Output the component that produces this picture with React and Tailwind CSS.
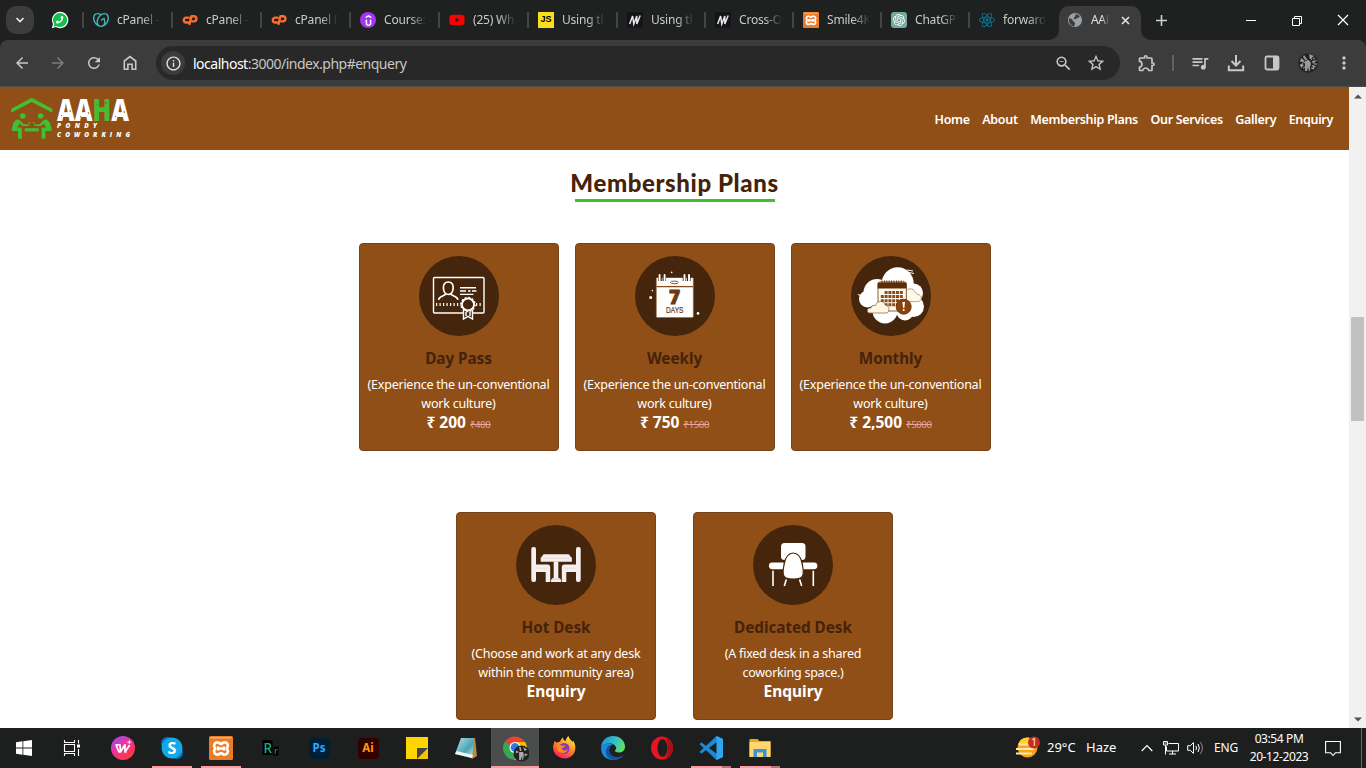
import React from 'react';
import { FaPhoneAlt, FaYoutube } from 'react-icons/fa';
import { SiGodaddy, SiUdemy, SiOpenai, SiReact } from 'react-icons/si';
import {
  MdArrowBack, MdArrowForward, MdRefresh, MdOutlineInfo, MdZoomOut, MdStarBorder,
  MdOutlineExtension, MdQueueMusic, MdMoreVert,
} from 'react-icons/md';

const MdnIcon = () => (
  <svg width="16" height="16" viewBox="0 0 16 16"><rect width="16" height="16" fill="#15141a" /><path d="M2.700 12 5.600 4 6.800 12 9.800 4 9.800 12 13.200 3.500" fill="none" stroke="#e8e8e8" strokeWidth="1.500" /></svg>
);
const GlobeIcon = () => (
  <svg width="16" height="16" viewBox="0 0 16 16"><circle cx="8" cy="8" r="7" fill="#9aa0a6" /><path d="M2.2 6.2c2 .2 3.4.9 3.7 2.5.3 1.1 1.8.7 2 2.2.1 1.3-.3 2-.9 3.5-3.400-.6-5.700-4-4.800-8.200zM8.200 2.300c1.500-.2 3.500.5 4.800 2.200-1 .2-1.200 1.400-2.500 1.500-1.300.2-1.200 1.500-2.600 1.300-1.200-.2-1.500-1.700-.4-2.300.8-.4 1.400-1.300.7-2.700z" fill="#3c3c3c" /></svg>
);
const CpanelIcon = () => (
  <svg width="17" height="16" viewBox="0 0 17 16" fill="none" stroke="#ff6c2c" strokeWidth="2.500" strokeLinecap="round" strokeLinejoin="round">
    <path d="M7 5.500H4.500a2.600 2.600 0 0 0 0 5.200H6.500M8 12.200 10 4h2.600a2.700 2.700 0 0 1 0 5.400H11" />
  </svg>
);
const XamppTile = ({ size }) => (
  <svg className={size === 'lg' ? 'size-6' : 'size-4'} viewBox="0 0 24 24">
    <rect width="24" height="24" rx="1.500" fill="#ec7a26" />
    <path d="M1.500 1.800h21" stroke="#f8b98a" strokeWidth="1.300" />
    <path d="M8.500 6.300c2 0 2.500 1.700 3.500 1.700s1.500-1.700 3.500-1.700a3.300 3.300 0 0 1 2.800 5.200c-.4.600-.4 1.400 0 2a3.300 3.300 0 0 1-2.800 5.200c-2 0-2.500-1.700-3.500-1.700s-1.500 1.700-3.500 1.700a3.300 3.300 0 0 1-2.800-5.200c.4-.6.4-1.400 0-2a3.300 3.300 0 0 1 2.800-5.200zM9 10.500v4M15 10.500v4M9 12.500h6" fill="none" stroke="#fff" strokeWidth="2.700" strokeLinejoin="round" />
  </svg>
);

const tabs = [
  ['cPanel - N', <SiGodaddy className="size-4 text-[#3fb5b8]" />],
  ['cPanel - F', <CpanelIcon />],
  ['cPanel File', <CpanelIcon />],
  ['Course: T', <span className="flex size-4 items-center justify-center rounded-full bg-[#a435f0]"><SiUdemy className="size-[11px] text-white" /></span>],
  ['(25) What', <FaYoutube className="size-4 text-[#ff0000]" />],
  ['Using the', <span className="flex size-4 items-center justify-center bg-[#f7df1e] font-['Liberation_Sans',sans-serif] text-[9px] font-bold text-black">JS</span>],
  ['Using the', <MdnIcon />],
  ['Cross-Ori', <MdnIcon />],
  ['Smile4Kids', <XamppTile />],
  ['ChatGPT', <span className="flex size-4 items-center justify-center rounded-[3px] bg-[#75a99c]"><SiOpenai className="size-3 text-white" /></span>],
  ['forwardRef', <SiReact className="size-4 text-[#087ea4]" />],
];

const fade = '[mask-image:linear-gradient(to_right,black_60%,transparent_100%)]';

function Avatar() {
  return (
    <svg width="20" height="20" viewBox="0 0 20 20">
      <circle cx="10" cy="10" r="9.800" fill="#242424" />
      <path d="M3 5l4 3-5 1zM6 2l3 4-1 2-3-4zM11 1l1 5 4-3zM14 8l5-1-4 4zM2 11l4 1-3 3zM7 8h5l1 3-1 3v4h-1l-1-4-1 4H7v-5zM14 12l4 1-3 3z" fill="#999" />
      <path d="M4 8l3 2M12 4l2 3M15 5l2 1M5 15l2-1M16 11h3M9 7l2 1M3 13l2-3M13 15l3 1" stroke="#ddd" strokeWidth=".7" />
    </svg>
  );
}

function TabStrip() {
  return (
    <div className="flex h-10 items-start bg-[#1f2120] text-[12px] text-[#c9cbca]">
      <div className="ml-[6px] mt-[6px] flex size-7 items-center justify-center rounded-[10px] bg-[#3c3c3c]">
        <svg width="10" height="8" viewBox="0 0 10 8"><path d="M1.500 2 5 5.500 8.500 2" fill="none" stroke="#e8e8e8" strokeWidth="1.700" /></svg>
      </div>
      <span className="relative ml-[18px] mt-3 flex size-4 items-center justify-center">
        <svg className="absolute -inset-px" width="18" height="18" viewBox="0 0 18 18"><path d="M9 .8a8.200 8.200 0 1 1-4 15.300L.8 17.300 2 13A8.200 8.200 0 0 1 9 .8z" fill="#fff" /><path d="M9 2a7 7 0 1 1-3.700 12.900l-2.800.8.800-2.700A7 7 0 0 1 9 2z" fill="#12c04a" /></svg>
        <FaPhoneAlt className="relative size-[7.500px] -scale-x-100 text-white" />
      </span>
      <div className="ml-[14px] flex">
        {tabs.map(([t, icon], i) => (
          <div key={i} className={'flex h-10 shrink-0 items-center ' + (i < 6 ? 'w-[89px]' : 'w-[88px]')}>
            <span className="h-4 w-[1.500px] shrink-0 bg-[#434544]" />
            <span className="ml-[9.500px] flex w-4 shrink-0">{icon}</span>
            <span className={'ml-[8px] h-4 w-[43px] shrink-0 overflow-hidden whitespace-nowrap leading-4 tracking-[-0.2px] ' + fade}>{t}</span>
          </div>
        ))}
      </div>
      <div className="relative ml-[3px] mt-[6px] flex h-[34px] w-[82px] items-center rounded-t-[10px] bg-[#3c3c3c] pb-[6px] text-[#e3e3e3]">
        <svg className="absolute bottom-0 -left-[10px]" width="10" height="10"><path d="M10 0v10H0A10 10 0 0 0 10 0" fill="#3c3c3c" /></svg>
        <svg className="absolute bottom-0 -right-[10px]" width="10" height="10"><path d="M0 0v10h10A10 10 0 0 1 0 0" fill="#3c3c3c" /></svg>
        <span className="ml-2"><GlobeIcon /></span>
        <span className={'ml-2 w-[18px] overflow-hidden whitespace-nowrap tracking-[-0.3px] ' + fade}>AAHA</span>
        <svg className="ml-[12px]" width="9" height="9" viewBox="0 0 9 9"><path d="M1 1l7 7M8 1 1 8" stroke="#e3e3e3" strokeWidth="1.600" /></svg>
      </div>
      <svg className="ml-[15px] mt-[15px]" width="11" height="11" viewBox="0 0 11 11"><path d="M5.500 0v11M0 5.500h11" stroke="#d0d0d0" strokeWidth="1.600" /></svg>
      <div className="ml-auto flex pr-[17px] pt-[14px]">
        <svg width="104" height="13" viewBox="0 0 104 13" fill="none" stroke="#fff">
          <path d="M1 6.500h10" />
          <path d="M47.500 4.500h7v7h-7zM49.500 4.500v-2h7v7h-2" />
          <path d="M93 1l10 10M103 1 93 11" strokeWidth="1.200" />
        </svg>
      </div>
    </div>
  );
}

function Toolbar() {
  return (
    <div className="bg-[#1f2120]">
      <div className="flex h-[46px] items-center rounded-t-lg bg-[#3c3c3c] text-[#c7c7c7]">
        <div className="ml-[13px] flex gap-[18px]">
          <MdArrowBack className="size-[18px]" />
          <MdArrowForward className="size-[18px] text-[#7d7d7d]" />
          <MdRefresh className="size-[18px]" />
          <svg width="18" height="18" viewBox="0 0 18 18"><path d="M3.300 15.300V7L9 2.600 14.700 7v8.300h-3.600v-5H6.900v5z" fill="none" stroke="#c7c7c7" strokeWidth="1.600" /></svg>
        </div>
        <div className="ml-[17px] flex h-[34px] w-[964px] items-center rounded-full bg-[#282828] pl-[5px] text-[14px]">
          <span className="flex size-6 items-center justify-center rounded-full bg-[#3c3c3c]"><MdOutlineInfo className="size-[17px] text-[#e3e3e3]" /></span>
          <span className="ml-2 tracking-[-0.5px] text-[#c7c7c7]"><span className="text-white">localhost</span>:3000/index.php#enquery</span>
          <MdZoomOut className="ml-auto size-[19px]" />
          <MdStarBorder className="ml-[13px] mr-[14px] size-[20px]" />
        </div>
        <MdOutlineExtension className="ml-[17px] size-5" />
        <span className="ml-[15px] h-4 w-[1.500px] bg-[#616161]" />
        <MdQueueMusic className="ml-[16px] size-5" />
        <svg className="ml-[16px]" width="20" height="20" viewBox="0 0 20 20"><path d="M10 2v10M5.500 8 10 12.500 14.500 8M2.800 12.500v4.700h14.400v-4.700" fill="none" stroke="#c7c7c7" strokeWidth="2" /></svg>
        <svg className="ml-[16px]" width="20" height="20" viewBox="0 0 20 20"><rect x="3.500" y="3.500" width="13" height="13" rx="1.500" fill="none" stroke="#c7c7c7" strokeWidth="1.800" /><path d="M11 3.500h5.500v13H11z" fill="#c7c7c7" /></svg>
        <span className="ml-[16px]"><Avatar /></span>
        <MdMoreVert className="ml-[16px] size-5" />
      </div>
      <div className="h-px bg-[#4c4c4c]" />
    </div>
  );
}

function Logo() {
  return (
    <svg width="130" height="50" viewBox="0 0 130 50">
      <g fill="#44bd32">
        <path d="M3.300 14.700 23.700 3.700l20.600 11v4L23.700 8 3.300 18.700z" />
        <circle cx="14.700" cy="22" r="2.800" /><circle cx="32.700" cy="22" r="2.800" />
        <path d="M16.700 34.200h14v3.200h-14z" />
        <path d="M9 25.500q2.500-.5 3.500 1.500l3.300 3.300h3.700v1.700h-5l-3-2.200-2 3.700h3.300q1 0 1 1.300v10H10V37H5q-1.700 0-1.300-2Q5 27 9 25.500zM38.400 25.500q-2.500-.5-3.500 1.500l-3.300 3.300h-3.700v1.700h5l3-2.200 2 3.700h-3.300q-1 0-1 1.300v10h3.800V37h5q1.700 0 1.300-2Q42.400 27 38.400 25.500z" />
      </g>
      <path d="M17.500 31.500h3l1.500-3.700M29.900 31.500h-3l-1.500-3.700" fill="none" stroke="#44bd32" strokeWidth="1" />
      <g fill="#fff" fontFamily="'Open Sans', sans-serif" fontWeight="800">
        <text x="49" y="26.800" fontSize="29.500" textLength="72" lengthAdjust="spacingAndGlyphs">AA<tspan fill="#44bd32">H</tspan>A</text>
        <g fontSize="6.500" fontStyle="italic">
          <text x="49" y="33.600" textLength="40">PONDY</text>
          <text x="49" y="42.800" textLength="73">COWORKING</text>
        </g>
      </g>
      <path d="M53 21l1 1M62 16l.5 2M60 24v1M72 22l1 1M80 18l1 2M89 10l.5 1M98 8v2M91 23l1 1M107 22l1 1M116 17l.5 2M114 24v1" stroke="#8f4f17" strokeWidth=".9" />
    </svg>
  );
}

const art = {
  day: (
    <g fill="none" stroke="#fff" strokeWidth="1.400">
      <path d="M45 57H15.500a1 1 0 0 1-1-1V22.500a1 1 0 0 1 1-1h48.500a1 1 0 0 1 1 1V56a1 1 0 0 1-1 1H53.500" />
      <path d="M29.300 26c3.500 0 5.200 2.500 4.900 6-.3 3.800-2.200 6.500-4.900 6.500S24.700 35.800 24.400 32c-.3-3.500 1.400-6 4.900-6zM26.500 38c-.5 2-6 1.500-7 5.800M32 38c.5 2 6 1.500 7 5.800" strokeWidth="1.700" />
      <path d="M41 31.700h16M41 35h6M49 35h2.500M53 35h4.500M41 38.400h13.500" />
      <path d="M17 48.600h25M57 48.600h7" strokeWidth="3" strokeDasharray="1.200 2.300" />
      <path d="M44.500 54v9l4.500-2.700 4.500 2.700v-9M47 56v4M51 56v4" />
      <circle cx="49" cy="48.500" r="6" fill="#45260c" strokeWidth="1.800" />
      <circle cx="49" cy="48.500" r="7" strokeWidth="1.400" strokeDasharray="1.900 1.770" />
    </g>
  ),
  week: (
    <g>
      <rect x="21.300" y="21.500" width="37" height="40" rx="1" fill="#fff" stroke="#a6652f" strokeWidth=".6" />
      <path d="M21.500 30.600h36.600" stroke="#8a4a16" strokeWidth="1.300" />
      <path d="M21 17h37v4.500H21z" fill="#45260c" />
      <g stroke="#45260c" strokeWidth="3.600"><path d="M25 20v5M29.300 20v5M49.500 20v5M53.800 20v5" /></g>
      <g stroke="#fff" strokeWidth="1.900" strokeLinecap="round"><path d="M24.600 19v5.500M29.600 19v5.500M49.500 19v5.500M54 19v5.500" /></g>
      <ellipse cx="39.400" cy="26.400" rx="4" ry="1.300" fill="none" stroke="#7b3f10" strokeWidth=".9" />
      <text x="39.500" y="48" textAnchor="middle" fontFamily="'Open Sans',sans-serif" fontSize="19" fontWeight="800" fill="#70380d" stroke="#70380d" strokeWidth=".8">7</text>
      <text x="31" y="57" textLength="17.500" lengthAdjust="spacingAndGlyphs" fontFamily="'Liberation Sans',sans-serif" fontSize="8.800" fill="#633412" stroke="#633412" strokeWidth=".2">DAYS</text>
      <g fill="#fff"><circle cx="15.700" cy="41.600" r="1.500" /><circle cx="17.400" cy="34.600" r=".8" /><circle cx="63" cy="57.400" r="1.300" /><circle cx="36.700" cy="16.400" r=".8" /></g>
    </g>
  ),
  month: (
    <g>
      <g fill="#fff">
        <circle cx="46.700" cy="27.300" r="16" /><circle cx="26" cy="36.500" r="13.500" /><circle cx="16.500" cy="43" r="8.500" />
        <circle cx="34" cy="55" r="12.500" /><circle cx="62.500" cy="37" r="9.500" /><circle cx="62.500" cy="50.500" r="10.500" /><circle cx="54" cy="56" r="8.500" />
        <rect x="24" y="34" width="36" height="22" /><path d="M6 38l5 1-1 2z" />
      </g>
      <path d="M56 14l6 1M58 16.500l5 1" stroke="#fff" strokeWidth="1" />
      <path d="M55 45.600V35c1.500-2.500 7-3.500 9 .8 1.500 1.800 1.500 2.400 3 2.700 3 .5 4.500 3.700 2.300 6-1 1.200-3 1.100-5 1.100z" fill="#fff9ea" stroke="#a77a4f" strokeWidth=".7" />
      <rect x="27" y="26" width="28.300" height="29" rx="1.500" fill="#fffaf0" stroke="#6d3811" strokeWidth=".8" />
      <path d="M26.600 32.500V28a1.500 1.500 0 0 1 1.500-1.500h26a1.500 1.500 0 0 1 1.500 1.500v4.500z" fill="#5c2c07" />
      <path d="M30.500 26h22" stroke="#5c2c07" strokeWidth="3" strokeDasharray="1 1.400" />
      <g stroke="#8a4b19" strokeWidth="3" strokeDasharray="3 .8"><path d="M33.600 36.500h19M29.800 40.600h22.700M29.800 44.700h22.700M29.800 48.700h22" /></g>
      <path d="M18 57c-3-1-2-5.500 1.800-5 .6-2.400 3-3 4.500-2.300 1.500-5.500 8.700-5.700 10-.5 3.700 0 5.200 5.800 1.700 7.800z" fill="#fff6e3" stroke="#8f5a2c" strokeWidth=".7" />
      <circle cx="52.700" cy="50.700" r="7.500" fill="#8a4310" stroke="#5f2b05" strokeWidth=".8" />
      <path d="M51.400 46h2.600l-.7 6h-1.200z" fill="#fff" /><circle cx="52.700" cy="54" r="1" fill="#fff" />
    </g>
  ),
  hot: (
    <g fill="#f5f0f0">
      <rect x="15.300" y="22" width="4.700" height="35" rx="2" /><rect x="60" y="22" width="4.700" height="35" rx="2" />
      <path d="M19 39.500h12.500q2.700 0 2.700 2.700V57h-4.500V47H19zM61 39.500H48.500q-2.700 0-2.700 2.700V57h4.500V47H61z" />
      <path d="M27.500 29.300h25.300l2.200 3h.8v4.500H24.700v-4.500h.8z" />
      <path d="M37.700 36.500h4.600v16.200q2.900.4 2.900 4.300H34.900q0-3.900 2.800-4.300z" />
      <path d="M19.500 43.200H31M60.500 43.200H49M27 33.300h27" stroke="#d8cdca" strokeWidth=".7" fill="none" strokeDasharray="2 .7" />
      <path d="M36 54.200h8.300" stroke="#c8bab5" strokeWidth=".7" />
    </g>
  ),
  dedicated: (
    <g fill="#fff">
      <rect x="28" y="18" width="24.500" height="17" rx="3.500" />
      <path d="M40.200 28c5 0 7.600 3.800 8.900 10.500 1.200 5 2 9.400.4 12.500-1.300 2.500-3.700 3-9.300 3s-8-.5-9.300-3c-1.600-3.100-.8-7.500.4-12.500C32.600 31.800 35.200 28 40.200 28z" stroke="#45260c" strokeWidth="1.200" />
      <path d="M19.300 37.400H30.700l-1 6.800H19.300a3.400 3.400 0 0 1 0-6.800zM61 37.400H49.700l1 6.800H61a3.400 3.400 0 0 0 0-6.800z" />
      <path d="M20 45.800V61M60.300 45.800V61M33.300 54.500 31.300 61M46.600 54.500 48.700 61" stroke="#fff" strokeWidth="1.600" />
    </g>
  ),
};

function Card({ kind, title, lines, price, old }) {
  return (
    <div className="flex h-[208px] w-[200px] flex-col items-center rounded border border-[#774215] bg-[#8f4f17] pt-3 text-center">
      <svg width="80" height="80" viewBox="0 0 80 80"><circle cx="40" cy="40" r="40" fill="#45260c" />{art[kind]}</svg>
      <h3 className="mt-[10px] text-[15.300px] leading-6 font-bold tracking-[-0.05px] whitespace-nowrap text-[#45220a]">{title}</h3>
      <p className="mt-[5px] text-[12.500px] leading-[19px] tracking-[-0.24px] whitespace-nowrap text-white">{lines[0]}<br />{lines[1]}</p>
      <p className="flex items-baseline text-[15.500px] leading-[19px] font-bold whitespace-nowrap text-white">
        {price}{old && <s className="ml-1 text-[9.500px] font-normal tracking-[-0.3px] text-[#eba3a3]">{old}</s>}
      </p>
    </div>
  );
}

const exp = ['(Experience the un-conventional', 'work culture)'];

function Page() {
  return (
    <div className="flex h-[641px] bg-white">
      <div className="w-[1349px]">
        <header className="flex h-[63px] items-center bg-[#8f4f17] pl-2">
          <Logo />
          <nav className="ml-auto mr-4 flex gap-[12.500px] pt-[3px] text-[12.500px] font-semibold tracking-[-0.32px] text-white">
            {['Home', 'About', 'Membership Plans', 'Our Services', 'Gallery', 'Enquiry'].map((n) => <a key={n}>{n}</a>)}
          </nav>
        </header>
        <main className="flex flex-col items-center">
          <h2 className="mt-[17px] h-[32px] font-['Lato',sans-serif] text-[24px] leading-[32px] font-black tracking-[0.6px] text-[#45220a]">Membership Plans</h2>
          <div className="h-[3px] w-[200px] bg-[#44bd32]" />
          <div className="mt-[41px] flex gap-4">
            <Card kind="day" title="Day Pass" lines={exp} price="₹ 200" old="₹400" />
            <Card kind="week" title="Weekly" lines={exp} price="₹ 750" old="₹1500" />
            <Card kind="month" title="Monthly" lines={exp} price="₹ 2,500" old="₹5000" />
          </div>
          <div className="mt-[61px] flex gap-[37px]">
            <Card kind="hot" title="Hot Desk" lines={['(Choose and work at any desk', 'within the community area)']} price="Enquiry" />
            <Card kind="dedicated" title="Dedicated Desk" lines={['(A fixed desk in a shared', 'coworking space.)']} price="Enquiry" />
          </div>
        </main>
      </div>
      <div className="flex w-[17px] flex-col items-center bg-[#f1f1f1]">
        <svg className="mt-[7px]" width="8" height="5"><path d="M0 4.500h8L4 .5z" fill="#505050" /></svg>
        <div className="mt-[218px] h-[104px] w-[13px] bg-[#c1c1c1]" />
        <svg className="mt-auto mb-[6px]" width="8" height="5"><path d="M0 .5h8L4 4.500z" fill="#505050" /></svg>
      </div>
    </div>
  );
}

const apps = [
  { i: (
    <svg width="24" height="24"><defs><linearGradient id="wps" x1="0" y1="0" x2=".7" y2="1"><stop offset="0" stopColor="#8c50ff" /><stop offset=".5" stopColor="#f0309a" /><stop offset="1" stopColor="#ff3b3b" /></linearGradient></defs><circle cx="12" cy="12" r="12" fill="url(#wps)" /><path d="M4.500 8.800H9L9.500 16 14 8.800 14 16 18.700 9M5 8.800 8 16h1.500L13 10M14 16h1.500" fill="none" stroke="#fff" strokeWidth="1.700" strokeLinejoin="round" /><path d="M18.300 4.300v3.800M16.400 6.200h3.800" stroke="#fff" strokeWidth="1" /></svg>) },
  { u: 1, i: (
    <svg width="24" height="24"><circle cx="7.500" cy="7.500" r="6.500" fill="#0b73c9" /><circle cx="16.500" cy="16.500" r="6.500" fill="#0872c4" /><circle cx="12" cy="12" r="10.500" fill="#15a8e4" /><text x="12" y="17.800" textAnchor="middle" fontFamily="'Open Sans',sans-serif" fontWeight="700" fontSize="16" fill="#fff">S</text></svg>) },
  { u: 1, i: <XamppTile size="lg" /> },
  { i: (
    <svg width="24" height="24"><path d="M4.500 4h10v15h-10zM15.500 10.500h5v9h-5z" fill="#000" /><text x="5.500" y="17.300" fontFamily="'Noto Sans',sans-serif" fontSize="13.500" fontWeight="500" fill="#12b283">R</text><text x="16.300" y="18.300" fontFamily="'Noto Sans',sans-serif" fontSize="8.500" fill="#12b283">r</text></svg>) },
  { i: <span className="flex size-[21px] items-center justify-center rounded bg-[#001e36] text-[11.500px] font-bold text-[#31a8ff]">Ps</span> },
  { i: <span className="flex size-[21px] items-center justify-center rounded bg-[#330000] text-[11.500px] font-bold text-[#ff9a00]">Ai</span> },
  { i: <svg width="24" height="24"><path d="M1 1h22v11L12 23H1z" fill="#ffd500" /><path d="M12 12h11L12 23z" fill="#444" /><path d="M23 12v11H12z" fill="#f6c400" /></svg> },
  { i: (
    <svg width="24" height="24"><defs><linearGradient id="note" x1="0" y1="0" x2="1" y2="1"><stop stopColor="#b9e2ea" /><stop offset=".6" stopColor="#4aa3b4" /><stop offset="1" stopColor="#dceff1" /></linearGradient></defs><path d="M8 3 21 2l2 18-5 3z" fill="#b08b4b" /><path d="M7 2h13l-2 20L1 18z" fill="url(#note)" /><path d="M1 18l17 4 1-3L2.500 15z" fill="#eef6f6" /></svg>) },
  { active: 1, i: (
    <svg width="28" height="28" viewBox="0 0 28 28"><path d="M14 14 4 7.500A12 12 0 0 1 24 8H14z" fill="#ea4335" /><path d="M14 14V8h10.200A12 12 0 0 1 13.500 26z" fill="#fbbc04" /><path d="M14 14l-.5 12A12 12 0 0 1 4 7.500z" fill="#34a853" /><circle cx="14" cy="13.500" r="5.500" fill="#fff" /><circle cx="14" cy="13.500" r="4.400" fill="#3478e8" /><g transform="translate(12.500,11.500) scale(.8)"><circle cx="10" cy="10" r="10" fill="#222" /><path d="M3 6l4 2-4 2zM7 2h2l1 5H8zM12 2l2 5 3-2zM7 8h5l1 4-1 6h-1v-5l-2 5H7v-5zM14 10l4 1-4 3z" fill="#aaa" /></g></svg>) },
  { i: (
    <svg width="24" height="24"><defs><linearGradient id="ff" x1=".8" y1="0" x2=".3" y2="1"><stop stopColor="#fff04b" /><stop offset=".45" stopColor="#ff9326" /><stop offset="1" stopColor="#f6195e" /></linearGradient></defs><path d="M2.500 5 5 7c1-1 2-1.200 3-1.200 1-3 2.500-4 3-4.300 0 2 1 3 2.500 3.500C14 3 15 1 16.500 0c.5 3 3 4.500 4 6 .5-.3.500-1 .5-1.500 3 4 3 9 .5 13.500A11.500 11.500 0 0 1 1 11c.2-2 1-3.500 1.500-6z" fill="url(#ff)" /><circle cx="12" cy="12.500" r="5.500" fill="#823ac4" /><path d="M5 9c2-1 4 0 5 1 2-1 3 0 3 1-2 0-3 1-3 2 1 2 4 2 6 0 0 4-8 6-11 1z" fill="#ff8a18" /></svg>) },
  { i: (
    <svg width="24" height="24">
      <defs><linearGradient id="edge" x1="0" y1=".3" x2="1" y2=".6"><stop stopColor="#1695d8" /><stop offset=".55" stopColor="#35c1c5" /><stop offset="1" stopColor="#66e15a" /></linearGradient></defs>
      <path d="M0 12C0 5 5 0 12 0s12 5 12 10.500c0 4-3 6-6 6-2.500 0-4.500-.8-4-2 .5-.8 1.500-1.200 1-3C14 6.500 4 5 0 12z" fill="url(#edge)" />
      <path d="M0 12C2 7 8 6 12 8.500c-5 1.500-6 10 1 12.500 3.500 1.500 7 0 9.500-2C20 22.500 16 24 12 24 5 24 0 19 0 12z" fill="#1a8bdc" />
      <path d="M12 8.500c-3 1-4.500 4-3.500 7.500 1.500 5 8.500 7 14 3C20 22.500 16 24 12 24 5 23 3.500 15 6 11.500 7.500 9 10 8 12 8.500z" fill="#1254a4" />
    </svg>) },
  { i: <svg width="24" height="24"><ellipse cx="12" cy="12" rx="11" ry="11.500" fill="#e81323" /><ellipse cx="12.500" cy="12" rx="5" ry="9" fill="#1d1f1e" /><path d="M15 1c4 1 8 5 8 11s-4 10-8 11c4-4 4-18 0-22z" fill="#a90e1c" /></svg> },
  { u: 2, i: <svg width="24" height="24"><path d="M17.500 0 24 3v18l-6.500 3L2 9.500 .5 8 2.500 6.500 18 18V6L2.500 17.500.5 16 2 14.500z" fill="#1d8ad6" /><path d="M17.500 0 24 3v18l-6.500 3z" fill="#30a6f2" /></svg> },
  { u: 2, i: <svg width="24" height="24"><path d="M1.500 3h8l2 2h11v16h-21z" fill="#e8a91c" /><path d="M1.500 6h21v15h-21z" fill="#ffd76a" /><path d="M5.500 13h13v8h-3.500v-4.500H9V21H5.500z" fill="#3b93dc" /></svg> },
];

function Taskbar() {
  return (
    <div className="flex h-10 bg-[#1d1f1e] text-white">
      <div className="flex w-12 items-center justify-center">
        <svg width="16" height="16" viewBox="0 0 16 16"><path d="M0 2.200 6.500 1.300v6.300H0zM7.300 1.200 16 0v7.600H7.300zM0 8.400h6.500v6.300L0 13.800zM7.300 8.400H16V16l-8.700-1.200z" fill="#fff" /></svg>
      </div>
      <div className="flex w-[50.500px] items-center justify-center pr-[2px]">
        <svg width="18" height="16" viewBox="0 0 18 16" fill="none" stroke="#fff" strokeWidth="1.100"><path d="M1.500 4.500h10v7h-10zM1.500 0v2.500h10V0M1.500 16v-2.500h10V16M15.500 0v3.500M15.500 9v7" /><path d="M14 4.500h3v3h-3z" fill="#fff" stroke="none" /></svg>
      </div>
      {apps.map((a, n) => (
        <div key={n} className="flex w-[49px] flex-col items-center">
          <div className={'flex h-[38px] w-12 items-center justify-center pt-[2px] ' + (a.active ? 'bg-[#4b4d4c]' : '')}>{a.i}</div>
          {a.active && <div className="h-[2px] w-12 bg-[#ff9ba0]" />}
          {a.u === 1 && <div className="h-[2px] w-10 bg-[#ff9ba0]" />}
          {a.u === 2 && <div className="flex h-[2px] w-10"><span className="w-[31px] bg-[#ff9ba0]" /><span className="w-[9px] bg-[#b47579]" /></div>}
        </div>
      ))}
      <div className="ml-auto flex items-center text-[13px]">
        <svg width="25" height="24" viewBox="0 0 25 24">
          <circle cx="12.500" cy="11.500" r="10" fill="#f8a51b" /><path d="M3 8.500a10 10 0 0 1 19 0z" fill="#ffd02b" />
          <path d="M4 8.500h12M1 13h18M1 17.500h16" stroke="#ffe7ae" strokeWidth="1.800" />
          <circle cx="19" cy="6.500" r="6" fill="#c92b20" /><text x="19" y="10.200" textAnchor="middle" fontFamily="'Open Sans',sans-serif" fontSize="10" fill="#fff">1</text>
        </svg>
        <span className="ml-[7px] w-[39px] whitespace-nowrap">29°C</span>
        <span className="w-[55px]">Haze</span>
        <svg width="12" height="8" viewBox="0 0 12 8"><path d="M.7 7 6 1.500 11.300 7" fill="none" stroke="#fff" strokeWidth="1.200" /></svg>
        <svg className="ml-[10px]" width="17" height="14" viewBox="0 0 17 14" fill="none" stroke="#fff"><path d="M5.500 2.500h10v7.500H3.500V5.500M9.500 10v3M6 13h7" /><path d="M.5.500h4v3.500h-4zM2.500 4v9.500M1.500 2h2" /></svg>
        <svg className="ml-[7px]" width="17" height="14" viewBox="0 0 17 14" fill="none" stroke="#fff"><path d="M.7 4.700h2.600L6.500 1.500v11L3.300 9.300H.7zM8.800 4.800q1.500 2.200 0 4.400M11 3q2.700 4 0 8" /><path d="M13.300 1q4.300 6 0 12" stroke="#888" /></svg>
        <span className="ml-[10px] w-[35px] text-[12px] tracking-[-0.2px]">ENG</span>
        <div className="w-[60px] text-center text-[12px] leading-[18px] tracking-[-0.4px] whitespace-nowrap"><div>03:54 PM</div><div>20-12-2023</div></div>
        <svg className="ml-[16px]" width="16" height="17" viewBox="0 0 16 17"><path d="M.6 1.500h14.800v11.300h-5L8 15.500l-2.400-2.700h-5z" fill="none" stroke="#fff" strokeWidth="1.100" /></svg>
        <span className="ml-5 mr-1 h-10 w-px bg-[#6a6c6b]" />
      </div>
    </div>
  );
}

export default function App() {
  return (
    <div className="h-[768px] w-[1366px] overflow-hidden font-['Noto_Sans','Open_Sans',sans-serif]">
      <TabStrip />
      <Toolbar />
      <Page />
      <Taskbar />
    </div>
  );
}
